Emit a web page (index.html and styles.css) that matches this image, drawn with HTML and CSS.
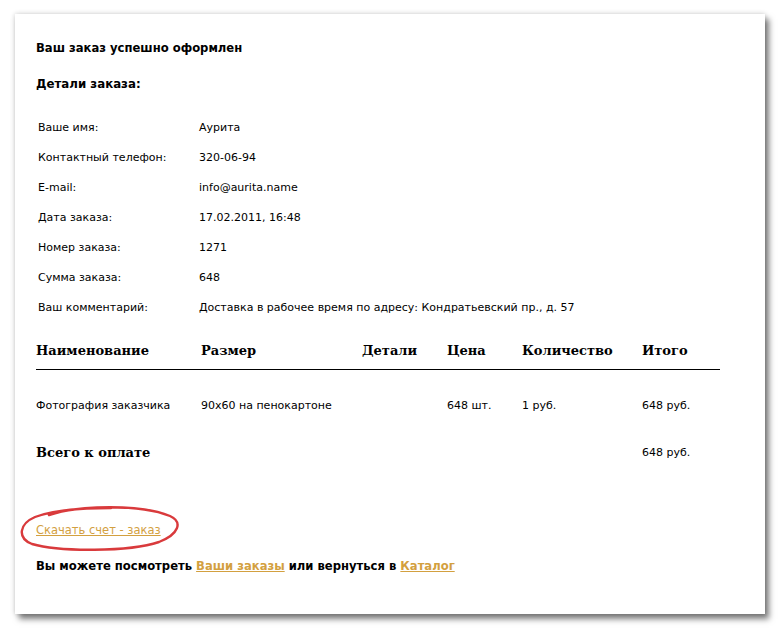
FILE: index.html
```html
<!DOCTYPE html>
<html lang="ru">
<head>
    <meta charset="UTF-8">
    <title>Заказ оформлен</title>
    <link rel="stylesheet" href="styles.css">
</head>
<body>
    <div class="page">
        <h1 class="title">Ваш заказ успешно оформлен</h1>
        <h2 class="subtitle">Детали заказа:</h2>

        <table class="details">
            <tr><td class="label">Ваше имя:</td><td>Аурита</td></tr>
            <tr><td class="label">Контактный телефон:</td><td>320-06-94</td></tr>
            <tr><td class="label">E-mail:</td><td>info@aurita.name</td></tr>
            <tr><td class="label">Дата заказа:</td><td>17.02.2011, 16:48</td></tr>
            <tr><td class="label">Номер заказа:</td><td>1271</td></tr>
            <tr><td class="label">Сумма заказа:</td><td>648</td></tr>
            <tr><td class="label">Ваш комментарий:</td><td>Доставка в рабочее время по адресу: Кондратьевский пр., д. 57</td></tr>
        </table>

        <table class="items">
            <colgroup>
                <col class="c-name">
                <col class="c-size">
                <col class="c-details">
                <col class="c-price">
                <col class="c-qty">
                <col class="c-total">
            </colgroup>
            <thead>
                <tr>
                    <th>Наименование</th>
                    <th>Размер</th>
                    <th>Детали</th>
                    <th>Цена</th>
                    <th>Количество</th>
                    <th>Итого</th>
                </tr>
            </thead>
            <tbody>
                <tr class="item-row">
                    <td>Фотография заказчика</td>
                    <td>90x60 на пенокартоне</td>
                    <td></td>
                    <td>648 шт.</td>
                    <td>1 руб.</td>
                    <td>648 руб.</td>
                </tr>
                <tr class="sum-row">
                    <td colspan="5" class="sum-label">Всего к оплате</td>
                    <td>648 руб.</td>
                </tr>
            </tbody>
        </table>

        <div class="download">
            <a href="#" class="download-link">Скачать счет - заказ</a>
            <!-- red marker ring around the download link -->
            <svg class="ring" width="166" height="50" viewBox="0 0 166 50">
                <path d="M32 11 C 62 1, 124 0, 153 12 C 166 18, 162 30, 142 38 C 112 48, 42 48, 15 40 C 0 34, 2 20, 18 13 C 34 7, 62 4, 94 4"
                      fill="none" stroke="#d93a3c" stroke-width="2.4" stroke-linecap="round"/>
            </svg>
        </div>

        <p class="links">Вы можете посмотреть <a href="#">Ваши заказы</a> или вернуться в <a href="#">Каталог</a></p>
    </div>
</body>
</html>
```

FILE: styles.css
```css
html {
    background-color: white;
}
body {
    margin: 0;
    padding: 14px 0 16px 15px;
    font-family: "DejaVu Sans", Verdana, sans-serif;
    font-size: 11px;
    color: black;
}
.page {
    box-sizing: border-box;
    width: 750px;
    height: 600px;
    padding: 26px 21px 0 21px;
    background-color: white;
    box-shadow: 4px 5px 6px rgba(0, 0, 0, 0.5), 0 0 5px rgba(0, 0, 0, 0.2);
}
.title {
    margin: 0;
    font-size: 11.6px;
    font-weight: bold;
    line-height: 16px;
}
.subtitle {
    margin: 20px 0 0 0;
    font-size: 11.8px;
    font-weight: bold;
    line-height: 16px;
}
.details {
    margin-top: 20px;
    border-collapse: collapse;
}
.details td {
    padding: 0 2px;
    height: 30px;
}
.details .label {
    width: 157px;
}
.items {
    width: 684px;
    margin-top: 19px;
    border-collapse: collapse;
    table-layout: fixed;
}
.c-name { width: 165px; }
.c-size { width: 161px; }
.c-details { width: 85px; }
.c-price { width: 75px; }
.c-qty { width: 120px; }
.c-total { width: 78px; }
.items th {
    font-family: "DejaVu Serif", Georgia, serif;
    font-size: 13px;
    text-align: left;
    padding: 0 0 10px 0;
    height: 18px;
    border-bottom: 1px solid black;
}
.items td {
    padding: 0;
    white-space: nowrap;
}
.item-row td {
    height: 70px;
}
.sum-row td {
    height: 24px;
}
.sum-label {
    font-family: "DejaVu Serif", Georgia, serif;
    font-size: 13px;
    font-weight: bold;
}
.download {
    position: relative;
    margin-top: 58px;
    line-height: 16px;
}
.download-link {
    color: #d3a03f;
    font-size: 11.5px;
}
.ring {
    position: absolute;
    left: -19px;
    top: -18px;
}
.links {
    margin: 19px 0 0 0;
    font-size: 11.6px;
    font-weight: bold;
    line-height: 16px;
}
.links a {
    color: #d3a03f;
}
```
